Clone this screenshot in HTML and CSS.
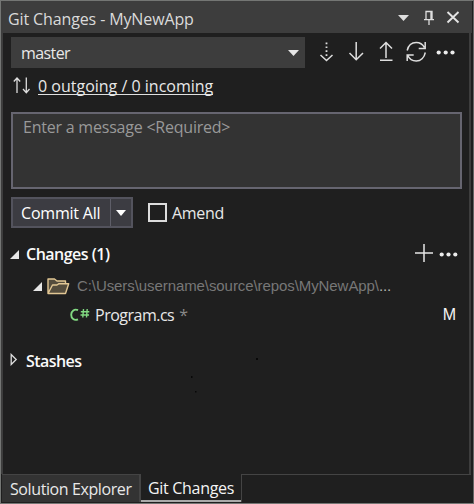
FILE: index.html
```html
<!DOCTYPE html>
<html lang="en">
<head>
<meta charset="utf-8">
<title>Git Changes - MyNewApp</title>
<link rel="stylesheet" href="styles.css">
</head>
<body>
<div class="window">
  <header class="titlebar">
    <span class="title">Git Changes - MyNewApp</span>
    <svg class="title-icons" width="64" height="20" viewBox="0 0 64 20">
      <path d="M0 8h11l-5.500 6z" fill="#dedede"/>
      <g fill="none" stroke="#dedede" stroke-width="1.300"><path d="M28 12.500V4.500h6v8M26 12.700h10M31 13v5"/><path d="M33.200 5v8" stroke-width="1.800"/></g>
      <path d="M49.500 5l11 10.500M60.500 5l-11 10.500" fill="none" stroke="#e4e4e4" stroke-width="1.900"/>
    </svg>
  </header>
  <main class="panel">
    <div class="branch-row">
      <div class="combo"><span class="branch">master</span><svg width="11" height="6" viewBox="0 0 11 6"><path d="M0 0h11L5.500 6z" fill="#e6e6e6"/></svg></div>
      <svg class="tools" width="140" height="24" viewBox="0 0 140 24" fill="none" stroke="#dedede" stroke-width="1.500">
        <path d="M11.500 1.500v14" stroke-width="1.800" stroke-dasharray="1.700 2.200"/><path d="M5.500 14l6 5.500 6-5.500"/>
        <path d="M41.200 1v17M34.500 12l6.700 6.700L48 12"/>
        <path d="M71 17V2M65 7.500l6-6 6 6M65 19.300h12.500"/>
        <path d="M92.200 9.500c1-4.500 4.300-8 9-8 3.500 0 6.500 1.800 8.200 5M110.200 1v6.500h-6.500M110.300 11.500c-1 5-4.600 8.500-9 8.500-3.700 0-7-2-8.500-5.500M92.200 20v-6h6.500"/>
        <g fill="#ececec" stroke="none"><circle cx="123.700" cy="11.500" r="2.100"/><circle cx="130.700" cy="11.500" r="2.100"/><circle cx="137.500" cy="11.500" r="2.100"/></g>
      </svg>
    </div>
    <div class="sync-row">
      <svg width="17" height="18" viewBox="0 0 17 18" fill="none" stroke="#dedede" stroke-width="1.300"><path d="M4 16V1.500M.8 4.500L4 1 7.200 4.500M13.300.5v15M10 12l3.300 3.700 3.200-3.700"/></svg>
      <a class="sync-link">0 outgoing / 0 incoming</a>
    </div>
    <div class="message"><span class="placeholder">Enter a message &lt;Required&gt;</span></div>
    <div class="commit-row">
      <div class="commit"><span class="commit-label"><span class="commit-text">Commit All</span></span><span class="commit-drop"><svg width="10" height="6" viewBox="0 0 10 6"><path d="M0 0h10L5 6z" fill="#fff"/></svg></span></div>
      <span class="checkbox"></span><span class="amend">Amend</span>
    </div>
    <div class="row changes">
      <svg width="9" height="9" viewBox="0 0 9 9"><path d="M9 0v9H0z" fill="#e6e6e6"/></svg>
      <span class="heading changes-text">Changes (1)</span>
      <svg class="row-tools" width="44" height="20" viewBox="0 0 44 20"><path d="M1 9h18M10 0v18" stroke="#e6e6e6" stroke-width="1.500"/><g fill="#ececec"><circle cx="27.700" cy="10.500" r="2.100"/><circle cx="34.500" cy="10.500" r="2.100"/><circle cx="41.300" cy="10.500" r="2.100"/></g></svg>
    </div>
    <div class="row folder">
      <svg width="9" height="9" viewBox="0 0 9 9"><path d="M9 0v9H0z" fill="#e6e6e6"/></svg>
      <svg class="folder-icon" width="23" height="17" viewBox="0 0 23 17"><path d="M1 15.500V1h6.500l2.500 2h8.500v3M1 15.500L5.500 7 10 7l2-1.300h9.700L18.500 15.500z" fill="#554d3d" stroke="#e2c794" stroke-width="1.400" stroke-linejoin="round"/></svg>
      <span class="path">C:\Users\username\source\repos\MyNewApp\<span class="dots">...</span></span>
    </div>
    <div class="row file">
      <svg width="20" height="14" viewBox="0 0 20 14" fill="none" stroke="#82d982"><path d="M8 2.200C4.500.5 1.200 3 1.200 6.700c0 3.900 3 6.200 6.800 4.600" stroke-width="1.900"/><path d="M13.500 1l-.7 8.500M17.200 1l-.7 8.500M10.800 3.700h8.500M10.500 7h8.500" stroke-width="1.400"/></svg>
      <span class="filename">Program.cs</span><span class="star">*</span><span class="status">M</span>
    </div>
    <div class="row stashes">
      <svg width="8" height="13" viewBox="0 0 8 13"><path d="M1.200 1.500v10l5-5z" fill="none" stroke="#dedede" stroke-width="1.300"/></svg>
      <span class="heading stashes-text">Stashes</span>
    </div>
    <svg class="specks" width="70" height="40" viewBox="0 0 70 40" fill="#080808"><path d="M65 0h2v2h-2zM0 18h1.500v2H0zM4 33h1.500v1.500H4z"/></svg>
  </main>
  <footer class="tabs">
    <div class="tab"><span class="tab-one">Solution Explorer</span></div>
    <div class="tab active"><span class="tab-two">Git Changes</span></div>
    <div class="tab-rest"></div>
  </footer>
</div>
</body>
</html>
```
FILE: styles.css
```css
* { box-sizing: border-box; }
body { margin: 0; background: #1f1f1f; }
svg { display: block; flex: none; }
span, a { white-space: nowrap; }
.window {
  position: relative;
  width: 474px;
  height: 504px;
  display: flex;
  flex-direction: column;
  background: #1f1f1f;
  border: 1px solid #747674;
  border-right-color: #656565;
  color: #e8e8e8;
  font: 16px/22px "Open Sans", "Noto Sans", sans-serif;
}
.titlebar {
  flex: none;
  height: 32px;
  margin-right: 1px;
  padding: 0 10px 0 7px;
  display: flex;
  align-items: center;
  justify-content: space-between;
  background: #3d3d3d;
}
.title { color: #dadada; letter-spacing: -0.12px; padding-top: 3px; }
.panel {
  flex: none;
  width: 470px;
  height: 441px;
  padding: 4px 8px 0;
  border-left: 2px solid #3d3d3d;
  border-right: 2px solid #3d3d3d;
}
.branch-row { display: flex; height: 31px; align-items: center; }
.combo {
  width: 294px;
  height: 31px;
  padding: 0 6px 0 10px;
  display: flex;
  align-items: center;
  justify-content: space-between;
  background: #3d3d3d;
}
.branch { letter-spacing: -0.6px; }
.tools { margin-left: 10px; }
.sync-row { display: flex; height: 30px; margin-top: 3px; align-items: center; }
.sync-row svg { margin-left: 2px; }
.sync-link {
  margin-left: 8px;
  line-height: 16px;
  border-bottom: 1px solid #e0e0e0;
  letter-spacing: 0;
}
.message {
  width: 451px;
  height: 77px;
  margin-top: 11px;
  padding: 2px 10px;
  background: #333;
  border: 2px solid #666570;
}
.placeholder { color: #999; letter-spacing: -0.22px; }
.commit-row { display: flex; height: 31px; margin-top: 8px; align-items: center; }
.commit { display: flex; width: 122px; height: 31px; background: #3c3c42; border: 2px solid #53535d; }
.commit-label { width: 98px; padding: 3px 0 0 8px; border-right: 1px solid #5e5e68; color: #fff; }
.commit-text { letter-spacing: -0.2px; }
.commit-drop { flex: 1; display: flex; align-items: center; justify-content: center; }
.checkbox { width: 19px; height: 19px; margin-left: 15px; border: 2px solid #dcdcdc; }
.amend { margin-left: 5px; letter-spacing: -0.3px; }
.row { display: flex; align-items: center; height: 30px; }
.changes { margin-top: 11px; padding-right: 2px; }
.changes > svg:first-child { margin-left: -1px; }
.heading { margin-left: 7px; color: #fafafa; font-weight: 600; letter-spacing: -0.5px; }
.row-tools { margin-left: auto; margin-right: 1px; }
.folder { margin-top: 2px; padding-left: 22px; }
.folder-icon { margin-left: 5px; }
.path { margin-left: 7px; color: #777; font: 15px/20px "Liberation Sans", sans-serif; letter-spacing: -0.08px; }
.dots { color: #b5b5b5; }
.file { padding-left: 59px; margin-top: -1px; }
.filename { margin-left: 5px; letter-spacing: -0.5px; }
.star { margin-left: 5px; color: #888; }
.status { margin-left: auto; margin-right: 5px; color: #f4f4f4; font: 16px/20px "Liberation Sans", sans-serif; }
.stashes { margin-top: 16px; }
.stashes > svg { margin: -3px 0 0 -1px; }
.stashes-text { margin-left: 8px; letter-spacing: -0.55px; }
.specks { position: absolute; left: 190px; top: 357px; pointer-events: none; }
.tabs { flex: none; height: 28px; margin-left: 1px; margin-right: 2px; display: flex; }
.tab { width: 139px; padding: 3px 0 0 8px; background: #333; border-top: 1px solid #444; border-right: 2px solid #444; }
.tab-one { letter-spacing: -0.4px; }
.tab.active { width: 100px; padding: 3px 0 0 7px; background: #1f1f1f; border: 0; border-bottom: 2px solid #aaa; color: #f4f4f4; }
.tab-two { letter-spacing: -0.3px; }
.tab-rest { flex: 1; border-top: 1px solid #444; border-left: 1px solid #444; }
```
